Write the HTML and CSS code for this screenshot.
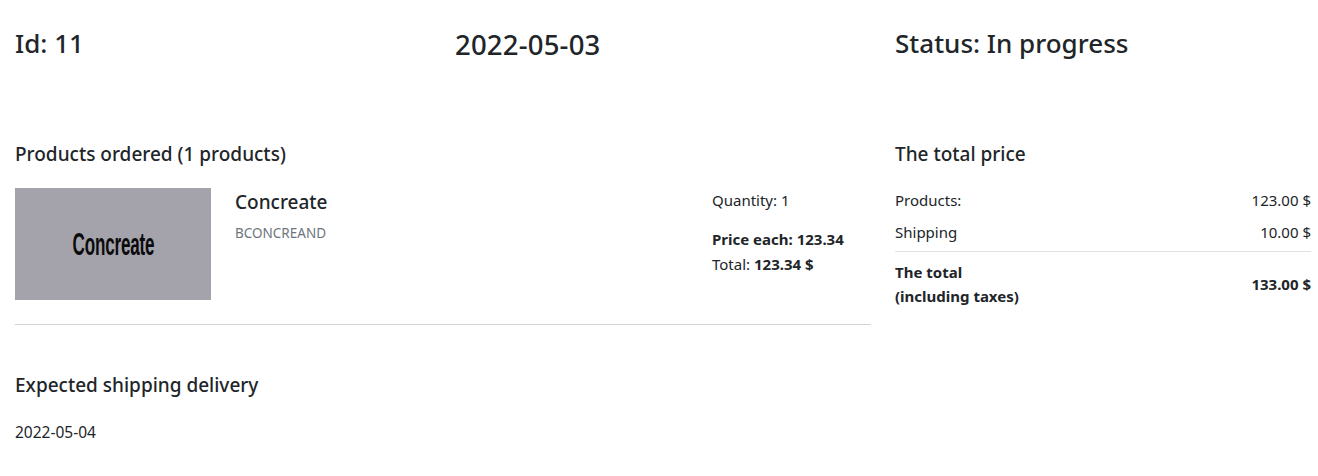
FILE: index.html
```html
<!DOCTYPE html>
<html lang="en">
<head>
<meta charset="utf-8">
<title>Order 11</title>
<link rel="stylesheet" href="styles.css">
</head>
<body>
<main class="page">
  <header class="order-head">
    <h3 class="head-item">Id: 11</h3>
    <h3 class="head-item head-date">2022-05-03</h3>
    <h3 class="head-item">Status: In progress</h3>
  </header>
  <section class="order-body">
    <div class="left-col">
      <h5 class="section-title">Products ordered (1 products)</h5>
      <div class="product">
        <div class="product-thumb"><span class="thumb-text">Concreate</span></div>
        <div class="product-info">
          <h5 class="product-name">Concreate</h5>
          <div class="product-sku">BCONCREAND</div>
        </div>
        <div class="product-price">
          <div class="qty">Quantity: 1</div>
          <div class="price-each">Price each: 123.34</div>
          <div class="price-total">Total: <b>123.34 $</b></div>
        </div>
      </div>
      <hr class="divider">
      <h5 class="section-title shipping-title">Expected shipping delivery</h5>
      <p class="ship-date">2022-05-04</p>
    </div>
    <div class="right-col">
      <h5 class="section-title">The total price</h5>
      <table class="totals">
        <tbody>
          <tr><td>Products:</td><td class="num">123.00 $</td></tr>
          <tr class="last"><td>Shipping</td><td class="num">10.00 $</td></tr>
          <tr class="grand"><td>The total<br>(including taxes)</td><td class="num">133.00 $</td></tr>
        </tbody>
      </table>
    </div>
  </section>
</main>
</body>
</html>
```
FILE: styles.css
```css
* { box-sizing: border-box; }
html, body { margin: 0; padding: 0; background: #fff; }
body {
  font-family: "Segoe UI", "Noto Sans", "Open Sans", sans-serif;
  color: #212529;
  font-size: 16px;
  line-height: 1.5;
}
.page { padding: 0 7px 0 15px; }
.order-head {
  display: grid;
  grid-template-columns: 416px 416px 416px;
  column-gap: 24px;
  padding-top: 28px;
}
.head-item {
  margin: 0;
  font-size: 26px;
  font-weight: 500;
  line-height: 1.2;
}
.head-date { font-size: 27.5px; letter-spacing: 0.2px; }
.order-body {
  display: grid;
  grid-template-columns: 856px 416px;
  column-gap: 24px;
  margin-top: 82px;
}
.section-title {
  margin: 0;
  font-size: 19px;
  font-weight: 500;
  line-height: 1.2;
}
.product {
  display: flex;
  margin-top: 22px;
}
.product-thumb {
  width: 196px;
  height: 112px;
  background: #a4a2aa;
  display: flex;
  align-items: center;
  justify-content: center;
  flex: none;
  overflow: hidden;
}
.thumb-text {
  display: inline-block;
  font-family: "Liberation Sans", "DejaVu Sans", sans-serif;
  font-weight: 700;
  font-size: 31px;
  line-height: 1;
  color: #0b0b0d;
  transform: scaleX(0.55);
  letter-spacing: -0.3px;
  margin-top: 1px;
}
.product-info {
  flex: 1;
  padding-left: 24px;
  padding-top: 3px;
}
.product-name {
  margin: 0 0 9px;
  font-size: 19px;
  font-weight: 500;
  line-height: 1.2;
}
.product-sku {
  font-size: 13.5px;
  color: #6c757d;
}
.product-price {
  width: 159px;
  flex: none;
  font-size: 15px;
  line-height: 25px;
  padding-top: 0;
}
.qty { margin-bottom: 14px; }
.price-each { font-weight: 700; }
.divider {
  border: 0;
  border-top: 1px solid #d2d2d2;
  margin: 24px 0 0;
}
.shipping-title { margin-top: 49px; }
.ship-date { margin: 24px 0 0; font-size: 15.5px; }
.totals {
  width: 100%;
  border-collapse: collapse;
  margin-top: 18px;
  font-size: 15px;
  line-height: 24px;
}
.totals td { padding: 4px 0; vertical-align: middle; }
.totals .num { text-align: right; }
.totals tr.last td { border-bottom: 1px solid #dee2e6; padding-bottom: 7px; }
.totals tr.grand td { font-weight: 700; padding-top: 8px; }
```
